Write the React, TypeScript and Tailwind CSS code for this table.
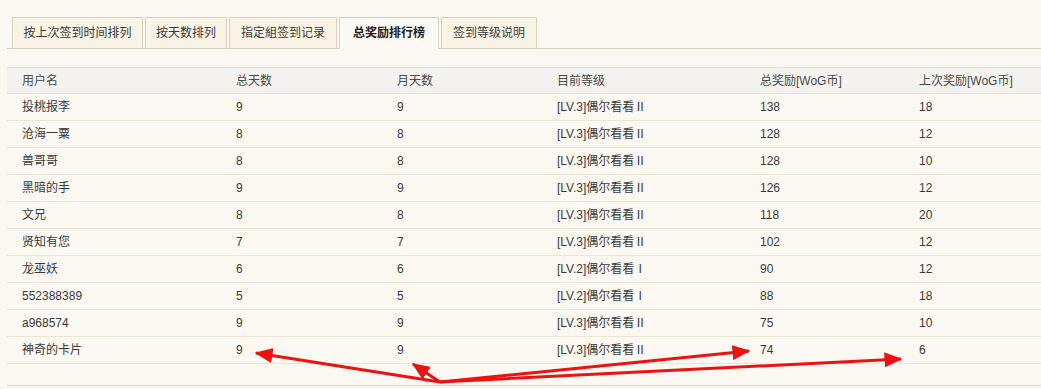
import React from "react";

const tabs = [
  { label: "按上次签到时间排列", w: "w-[131px]" },
  { label: "按天数排列", w: "w-[82px]" },
  { label: "指定組签到记录", w: "w-[108px]" },
  { label: "总奖励排行榜", w: "w-[100px]", active: true },
  { label: "签到等级说明", w: "w-[96px]" },
];

const cols = [
  { title: "用户名", w: "w-[214px]" },
  { title: "总天数", w: "w-[161px]" },
  { title: "月天数", w: "w-[160px]" },
  { title: "目前等级", w: "w-[203px]" },
  { title: "总奖励[WoG币]", w: "w-[159px]" },
  { title: "上次奖励[WoG币]", w: "flex-1" },
];

const rows: string[][] = [
  ["投桃报李", "9", "9", "[LV.3]偶尔看看Ⅱ", "138", "18"],
  ["沧海一粟", "8", "8", "[LV.3]偶尔看看Ⅱ", "128", "12"],
  ["兽哥哥", "8", "8", "[LV.3]偶尔看看Ⅱ", "128", "10"],
  ["黑暗的手", "9", "9", "[LV.3]偶尔看看Ⅱ", "126", "12"],
  ["文兄", "8", "8", "[LV.3]偶尔看看Ⅱ", "118", "20"],
  ["贤知有您", "7", "7", "[LV.3]偶尔看看Ⅱ", "102", "12"],
  ["龙巫妖", "6", "6", "[LV.2]偶尔看看Ⅰ", "90", "12"],
  ["552388389", "5", "5", "[LV.2]偶尔看看Ⅰ", "88", "18"],
  ["a968574", "9", "9", "[LV.3]偶尔看看Ⅱ", "75", "10"],
  ["神奇的卡片", "9", "9", "[LV.3]偶尔看看Ⅱ", "74", "6"],
];

function Arrows() {
  const o = { x: 440, y: 382 };
  const tips = [
    { x: 256, y: 353 },
    { x: 413, y: 364 },
    { x: 749, y: 351 },
    { x: 901, y: 359 },
  ];
  return (
    <svg className="pointer-events-none absolute left-0 top-0" width="1041" height="389">
      <defs>
        <marker id="ah" markerWidth="6" markerHeight="5" refX="5.5" refY="2.5" orient="auto" markerUnits="strokeWidth">
          <path d="M0,0 L6,2.5 L0,5 Z" fill="#ee1111" />
        </marker>
      </defs>
      {tips.map((t, i) => (
        <line
          key={i}
          x1={o.x}
          y1={o.y}
          x2={t.x}
          y2={t.y}
          stroke="#ee1111"
          strokeWidth="3"
          markerEnd="url(#ah)"
        />
      ))}
    </svg>
  );
}

export default function App() {
  return (
    <div
      className="relative h-[389px] w-[1041px] overflow-hidden bg-[#fbf8f1] text-[12px] text-[#3a3a3a]"
      style={{ fontFamily: '"Liberation Sans", "Noto Sans CJK SC", sans-serif' }}
    >
      <div className="ml-[7px] mt-[17px] flex h-[32px] border-b border-[#d6cfbf] pl-[5px]">
        {tabs.map((t) => (
          <div
            key={t.label}
            className={`mr-[2px] flex h-[32px] items-center justify-center border border-[#d9d1c0] ${t.w} ${
              t.active
                ? "-mb-px border-b-[#fbf9f4] bg-[#fbf9f4] font-bold text-[#222]"
                : "h-[31px] bg-[#f8f3e5]"
            }`}
          >
            {t.label}
          </div>
        ))}
      </div>

      <div className="ml-[7px] mt-[18px]">
        <div className="flex h-[27px] items-center border-y border-[#e4e2dc] bg-[#f3f2ee] text-[#4a4a4a]">
          {cols.map((c) => (
            <div key={c.title} className={`${c.w} pl-[15px]`}>
              {c.title}
            </div>
          ))}
        </div>
        {rows.map((r) => (
          <div key={r[0]} className="flex h-[27px] items-center border-b border-[#ebe5d6]">
            {r.map((cell, i) => (
              <div key={i} className={`${cols[i].w} pl-[15px]`}>
                {cell}
              </div>
            ))}
          </div>
        ))}
        <div className="h-[22px] border-b border-[#d8d1c1]" />
      </div>

      <Arrows />
    </div>
  );
}
